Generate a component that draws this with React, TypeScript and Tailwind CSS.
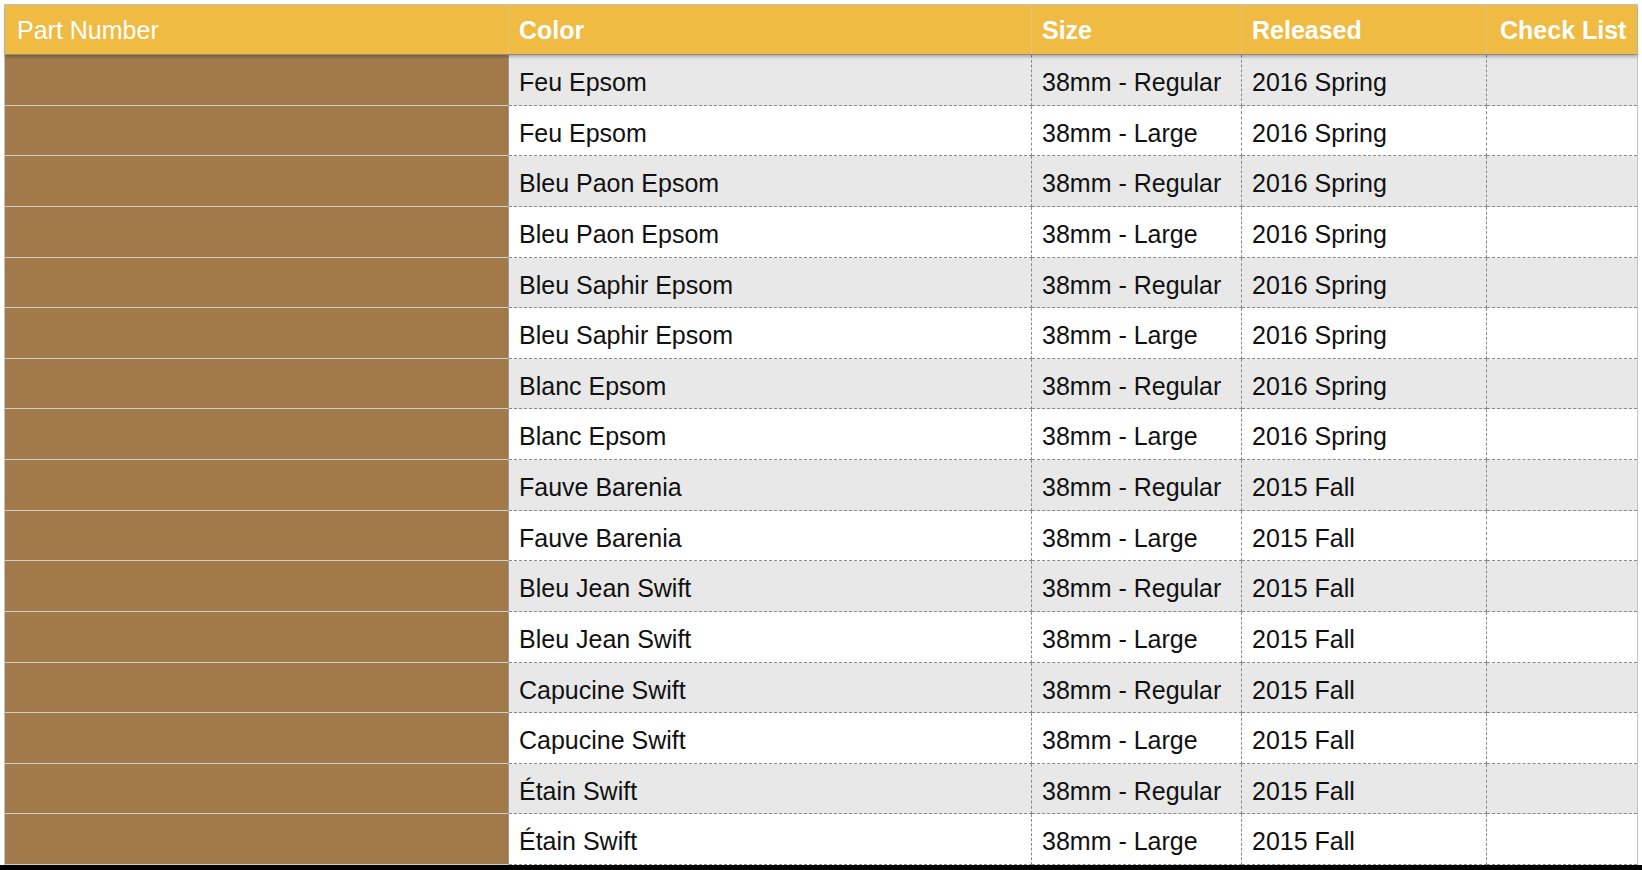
import React from "react";

const rows: [string, string, string][] = [
  ["Feu Epsom", "38mm - Regular", "2016 Spring"],
  ["Feu Epsom", "38mm - Large", "2016 Spring"],
  ["Bleu Paon Epsom", "38mm - Regular", "2016 Spring"],
  ["Bleu Paon Epsom", "38mm - Large", "2016 Spring"],
  ["Bleu Saphir Epsom", "38mm - Regular", "2016 Spring"],
  ["Bleu Saphir Epsom", "38mm - Large", "2016 Spring"],
  ["Blanc Epsom", "38mm - Regular", "2016 Spring"],
  ["Blanc Epsom", "38mm - Large", "2016 Spring"],
  ["Fauve Barenia", "38mm - Regular", "2015 Fall"],
  ["Fauve Barenia", "38mm - Large", "2015 Fall"],
  ["Bleu Jean Swift", "38mm - Regular", "2015 Fall"],
  ["Bleu Jean Swift", "38mm - Large", "2015 Fall"],
  ["Capucine Swift", "38mm - Regular", "2015 Fall"],
  ["Capucine Swift", "38mm - Large", "2015 Fall"],
  ["Étain Swift", "38mm - Regular", "2015 Fall"],
  ["Étain Swift", "38mm - Large", "2015 Fall"],
];

export default function App() {
  return (
    <div
      className="w-[1642px] h-[870px] overflow-hidden bg-white relative"
      style={{ fontFamily: '"Liberation Sans", Arial, sans-serif' }}
    >
      <div className="pt-[4px] pl-[4px]">
        <div className="w-[1634px] border-t border-l border-r border-[#c3c3c3] flex flex-col">
          {/* Header */}
          <div className="relative z-10 flex h-[50px] bg-[#f0bb42] border-b border-[#8c8c8c] shadow-[0_2px_3px_rgba(0,0,0,0.25)] text-white text-[25px]">
            <div className="w-[504px] shrink-0 flex items-center pl-[12px] pt-[3px] border-r border-[#e2c27c]">
              Part Number
            </div>
            <div className="w-[523px] shrink-0 flex items-center pl-[10px] pt-[3px] font-bold border-r border-[#e2c27c]">
              Color
            </div>
            <div className="w-[210px] shrink-0 flex items-center pl-[10px] pt-[3px] font-bold border-r border-[#e2c27c]">
              Size
            </div>
            <div className="w-[245px] shrink-0 flex items-center pl-[10px] pt-[3px] font-bold border-r border-[#e2c27c]">
              Released
            </div>
            <div className="w-[150px] shrink-0 flex items-center pl-[13px] pt-[3px] font-bold">
              Check List
            </div>
          </div>
          {/* Rows */}
          {rows.map((r, i) => {
            const bg = i % 2 === 0 ? "bg-[#e8e8e8]" : "bg-white";
            return (
              <div key={i} className="flex h-[50.625px] text-[25px] text-[#111]">
                <div className="w-[504px] shrink-0 bg-[#a27a4a] border-r border-[#9a9a9a] border-b border-b-[#cfcfcf]" />
                <div className={`w-[523px] shrink-0 flex items-center pl-[10px] pt-[6px] ${bg} border-r border-dashed border-[#8a8a8a] border-b`}>
                  {r[0]}
                </div>
                <div className={`w-[210px] shrink-0 flex items-center pl-[10px] pt-[6px] ${bg} border-r border-dashed border-[#8a8a8a] border-b`}>
                  {r[1]}
                </div>
                <div className={`w-[245px] shrink-0 flex items-center pl-[10px] pt-[6px] ${bg} border-r border-dashed border-[#8a8a8a] border-b`}>
                  {r[2]}
                </div>
                <div className={`w-[150px] shrink-0 ${bg} border-b border-dashed border-[#8a8a8a]`} />
              </div>
            );
          })}
          <div className="h-[10px] bg-black" />
        </div>
      </div>
      <div className="absolute left-0 bottom-0 w-[1642px] h-[5px] bg-black" />
    </div>
  );
}
